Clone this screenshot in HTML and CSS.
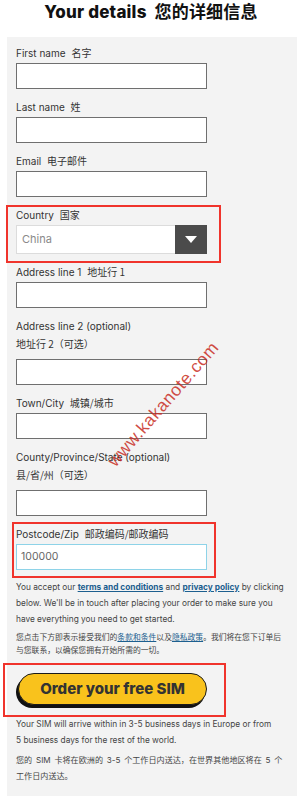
FILE: index.html
```html
<!DOCTYPE html>
<html>
<head>
<meta charset="utf-8">
<link rel="stylesheet" href="styles.css">
</head>
<body>
<h1 class="title">Your details <span class="cjk">您的详细信息</span></h1>
<div class="panel">
  <div class="field">
    <div class="label">First name <span class="cjk">名字</span></div>
    <div class="input"></div>
  </div>
  <div class="field">
    <div class="label">Last name <span class="cjk">姓</span></div>
    <div class="input"></div>
  </div>
  <div class="field">
    <div class="label">Email <span class="cjk">电子邮件</span></div>
    <div class="input"></div>
  </div>
  <div class="field mark-country">
    <div class="label">Country <span class="cjk">国家</span></div>
    <div class="select">
      <span class="select-value">China</span>
      <span class="select-btn"><svg width="12" height="7" viewBox="0 0 12 7"><path d="M0 0 L12 0 L6 7 Z" fill="#fff"/></svg></span>
    </div>
  </div>
  <div class="field">
    <div class="label">Address line 1 <span class="cjk">地址行 1</span></div>
    <div class="input"></div>
  </div>
  <div class="field">
    <div class="label two">Address line 2 (optional)<br><span class="cjk">地址行 2（可选）</span></div>
    <div class="input"></div>
  </div>
  <div class="field">
    <div class="label">Town/City <span class="cjk">城镇/城市</span></div>
    <div class="input"></div>
  </div>
  <div class="field">
    <div class="label two">County/Province/State (optional)<br><span class="cjk">县/省/州（可选）</span></div>
    <div class="input"></div>
  </div>
  <div class="field mark-post">
    <div class="label">Postcode/Zip <span class="cjk">邮政编码/邮政编码</span></div>
    <div class="input focus">100000</div>
  </div>
  <p class="note">You accept our <a class="link">terms and conditions</a> and <a class="link">privacy policy</a> by clicking below. We'll be in touch after placing your order to make sure you have everything you need to get started.</p>
  <p class="note-cn">您点击下方即表示接受我们的<a class="link-cn">条款和条件</a>以及<a class="link-cn">隐私政策</a>。我们将在您下订单后与您联系，以确保您拥有开始所需的一切。</p>
  <div class="btn-wrap">
    <div class="btn">Order your free SIM</div>
  </div>
  <p class="note after">Your SIM will arrive within in 3-5 business days in Europe or from 5&nbsp;business days for the rest of the world.</p>
  <p class="note-cn after-cn">您的 SIM 卡将在欧洲的 3-5 个工作日内送达，在世界其他地区将在 5 个工作日内送达。</p>
  <div class="watermark">www.kakanote.com</div>
</div>
</body>
</html>
```
FILE: styles.css
```css
html, body {
  margin: 0;
  padding: 0;
  background: #fff;
}
body {
  font-family: Inter, "Noto Sans CJK SC", sans-serif;
  color: #333;
}
.cjk {
  font-family: "Noto Sans CJK SC", sans-serif;
}
.title {
  margin: 0 0 15px;
  padding-top: 1px;
  font-size: 17px;
  line-height: 20px;
  font-weight: 800;
  text-align: center;
  color: #111;
  letter-spacing: 0.2px;
}
.title .cjk {
  font-weight: 700;
  margin-left: 4px;
}
.panel {
  position: relative;
  margin: 0 5px 0 7px;
  background: #f3f3f3;
  padding: 7px 9px 12px 9px;
}
.field {
  position: relative;
  margin-bottom: 9px;
}
.label {
  font-size: 10px;
  line-height: 19px;
  height: 19px;
  color: #333;
}
.label .cjk {
  margin-left: 3px;
  line-height: 1;
}
.label.two {
  line-height: 18px;
  height: 36px;
  padding-bottom: 6px;
}
.label.two .cjk {
  margin-left: 0;
}
.input {
  box-sizing: border-box;
  width: 191px;
  height: 26px;
  background: #fff;
  border: 1px solid #6f6f6f;
  font-size: 10.5px;
  line-height: 24px;
  padding-left: 4px;
  color: #666;
}
.input.focus {
  border-color: #8ed3e8;
}
.select {
  box-sizing: border-box;
  display: flex;
  width: 191px;
  height: 29px;
  background: #fff;
  border: 1px solid #dcdcdc;
}
.select-value {
  flex: 1;
  font-size: 11px;
  line-height: 27px;
  padding-left: 5px;
  color: #8a8a8a;
}
.select-btn {
  width: 32px;
  margin: -1px -1px -1px 0;
  background: #4b4b4b;
  display: flex;
  align-items: center;
  justify-content: center;
}
.mark-country::after,
.mark-post::after,
.btn-wrap::after {
  content: "";
  position: absolute;
  border: 2px solid #f0342c;
  box-sizing: border-box;
  pointer-events: none;
}
.mark-country::after {
  top: -1px;
  left: -10px;
  width: 215px;
  bottom: -9px;
}
.mark-post::after {
  top: -3px;
  left: -4px;
  width: 204px;
  bottom: -8px;
}
.note {
  margin: 3px 0 0;
  font-size: 8.3px;
  line-height: 16px;
  color: #444;
}
.link {
  color: #1d5f8f;
  font-weight: 700;
  text-decoration: underline;
}
.note-cn {
  margin: 3px 0 0;
  font-family: "Noto Sans CJK SC", sans-serif;
  font-size: 7.8px;
  line-height: 13px;
  color: #444;
}
.link-cn {
  color: #1d5f8f;
  text-decoration: underline;
}
.btn-wrap {
  position: relative;
  margin-top: 17px;
}
.btn-wrap::after {
  top: -10px;
  left: -13px;
  width: 223px;
  height: 54px;
}
.btn {
  box-sizing: border-box;
  margin-left: 2px;
  width: 189px;
  height: 32px;
  border: 1.5px solid #1a1a1a;
  border-radius: 16px;
  background: #f9c21c;
  box-shadow: -2px 3px 0 #111;
  text-align: center;
  font-size: 15px;
  font-weight: 800;
  line-height: 29px;
  color: #333;
}
.note.after {
  margin-top: 11px;
}
.note-cn.after-cn {
  margin-top: 4px;
  font-family: Inter, "Noto Sans CJK SC", sans-serif;
  font-size: 8.1px;
  line-height: 16px;
  word-spacing: 1.5px;
}
.watermark {
  position: absolute;
  left: 58px;
  top: 357px;
  width: 196px;
  text-align: center;
  font-family: "Liberation Sans", sans-serif;
  font-size: 17.5px;
  line-height: 20px;
  color: rgba(200, 45, 35, 0.85);
  transform: rotate(-49deg);
  letter-spacing: 0.5px;
}
```
